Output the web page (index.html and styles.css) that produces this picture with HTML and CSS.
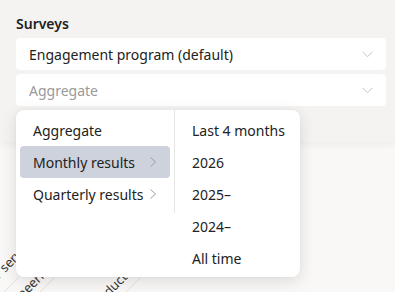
FILE: index.html
```html
<!DOCTYPE html>
<html>
<head>
<meta charset="utf-8">
<link rel="stylesheet" href="styles.css">
</head>
<body>
<div class="page">
  <section class="filters">
    <div class="label">Surveys</div>
    <div class="select">
      <span class="value">Engagement program (default)</span>
      <svg class="chev" width="11" height="7" viewBox="0 0 11 7"><path d="M0.5 0.8 L5.5 5.8 L10.5 0.8" fill="none" stroke="#c4c4c4" stroke-width="1"/></svg>
    </div>
    <div class="select">
      <span class="value placeholder">Aggregate</span>
      <svg class="chev" width="11" height="7" viewBox="0 0 11 7"><path d="M0.5 0.8 L5.5 5.8 L10.5 0.8" fill="none" stroke="#c4c4c4" stroke-width="1"/></svg>
    </div>
  </section>
  <section class="chart">
    <svg class="chart-svg" width="395" height="150" viewBox="0 0 395 150">
      <g stroke="#e4e3e1" stroke-width="1">
        <line x1="2" y1="152" x2="22" y2="132"/>
        <line x1="38" y1="152" x2="60" y2="130"/>
        <line x1="124" y1="152" x2="146" y2="130"/>
      </g>
      <g font-family="Noto Sans, sans-serif" font-size="13" fill="#333">
        <text transform="translate(35,101) rotate(-45)" text-anchor="end">Customer service</text>
        <text transform="translate(56,124) rotate(-45)" text-anchor="end">Engineering</text>
        <text transform="translate(128,136) rotate(-45)" text-anchor="end">Product</text>
      </g>
    </svg>
  </section>
  <div class="menu">
    <div class="col col-left">
      <div class="item">Aggregate</div>
      <div class="item active">Monthly results
        <svg class="arrow" width="8" height="12" viewBox="0 0 8 12"><path d="M1.5 1.5 L6.5 6 L1.5 10.5" fill="none" stroke="#a0a0a0" stroke-width="1"/></svg>
      </div>
      <div class="item">Quarterly results
        <svg class="arrow" width="8" height="12" viewBox="0 0 8 12"><path d="M1.5 1.5 L6.5 6 L1.5 10.5" fill="none" stroke="#a0a0a0" stroke-width="1"/></svg>
      </div>
    </div>
    <div class="col col-right">
      <div class="item">Last 4 months</div>
      <div class="item">2026</div>
      <div class="item">2025–</div>
      <div class="item">2024–</div>
      <div class="item">All time</div>
    </div>
  </div>
</div>
</body>
</html>
```

FILE: styles.css
```css
* { box-sizing: border-box; }
html, body { margin: 0; padding: 0; }
body {
  width: 395px;
  height: 292px;
  overflow: hidden;
  background: #f9f8f6;
  font-family: "Noto Sans", sans-serif;
  color: #222;
}
.page { position: relative; width: 395px; height: 292px; overflow: hidden; }
.filters {
  background: #f4f3f1;
  height: 142px;
  padding: 14px 9px 0 16px;
  box-shadow: 0 2px 8px rgba(0,0,0,0.06);
  position: relative;
  z-index: 1;
}
.label {
  font-size: 14px;
  font-weight: 600;
  line-height: 20px;
  color: #222;
  margin-bottom: 4px;
}
.select {
  height: 32px;
  background: #fff;
  border-radius: 4px;
  display: flex;
  align-items: center;
  justify-content: space-between;
  padding: 0 13px 0 13px;
  margin-bottom: 4px;
}
.value { font-size: 14px; color: #222; }
.value.placeholder { color: #9a9a9a; }
.chev { display: block; }
.chart { height: 150px; position: relative; }
.chart-svg { display: block; }
.menu {
  position: absolute;
  left: 16px;
  top: 110px;
  width: 284px;
  height: 167px;
  background: #fff;
  border-radius: 8px;
  box-shadow: 0 4px 16px rgba(0,0,0,0.12), 0 0 2px rgba(0,0,0,0.06);
  display: flex;
  align-items: flex-start;
  z-index: 2;
}
.col { padding: 4px; flex-shrink: 0; }
.col-left {
  width: 159px;
  border-right: 1px solid #e6e6e6;
  padding-bottom: 3px;
}
.col-right { flex: 1 1 auto; }
.item {
  height: 32px;
  display: flex;
  align-items: center;
  padding: 0 13px 0 13px;
  font-size: 14px;
  color: #222;
  border-radius: 4px;
  white-space: nowrap;
}
.item.active { background: #cdd2dd; }
.arrow {
  margin-left: auto;
  display: block;
}
```
